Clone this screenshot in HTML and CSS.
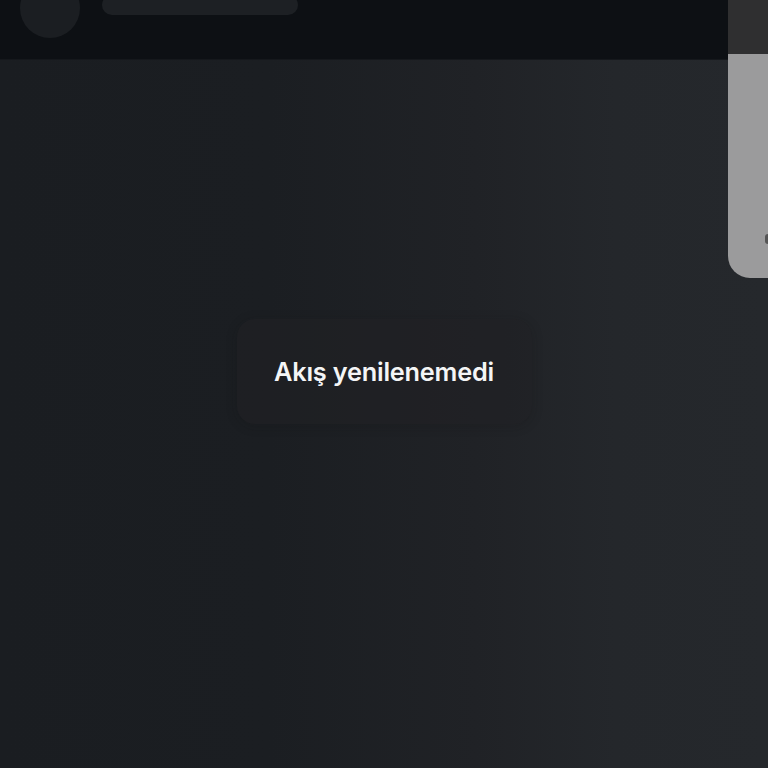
FILE: index.html
```html
<!DOCTYPE html>
<html lang="tr">
<head>
<meta charset="utf-8">
<link rel="stylesheet" href="styles.css">
</head>
<body>
<div class="page">
  <header class="topbar">
    <div class="avatar"></div>
    <div class="namebar"></div>
  </header>
  <main class="feed">
    <div class="toast">Akış yenilenemedi</div>
  </main>
  <aside class="sidepanel">
    <div class="side-top"></div>
    <div class="side-body"><span class="side-dot"></span></div>
  </aside>
</div>
</body>
</html>
```
FILE: styles.css
```css
html, body {
  margin: 0;
  padding: 0;
  width: 768px;
  height: 768px;
  overflow: hidden;
  background: #1b1e22;
}
.page {
  position: relative;
  width: 768px;
  height: 768px;
  display: flex;
  flex-direction: column;
  font-family: Inter, "Noto Sans", sans-serif;
}
.topbar {
  height: 60px;
  flex: none;
  background: #0d1014;
  display: flex;
  align-items: flex-start;
  gap: 22px;
  padding-left: 20px;
  box-sizing: border-box;
  border-bottom: 1px solid #15181c;
}
.avatar {
  width: 60px;
  height: 60px;
  margin-top: -22px;
  border-radius: 50%;
  background: #1b1e22;
}
.namebar {
  width: 196px;
  height: 20px;
  margin-top: -5px;
  border-radius: 10px;
  background: #1d2024;
}
.feed {
  flex: 1;
  display: flex;
  align-items: center;
  justify-content: center;
  padding-bottom: 86px;
  background: linear-gradient(90deg, #1a1d21 0%, #1b1e22 35%, #202226 62%, #24272b 80%, #25282c 100%);
}
.toast {
  width: 295px;
  height: 105px;
  box-sizing: border-box;
  display: flex;
  align-items: center;
  justify-content: center;
  border-radius: 18px;
  background: rgba(32, 33, 36, 0.55);
  box-shadow: 0 2px 12px rgba(20, 20, 22, 0.2);
  color: #f4f5f6;
  font-size: 25.3px;
  font-weight: 600;
  letter-spacing: -0.2px;
}
.sidepanel {
  position: absolute;
  top: 0;
  right: 0;
  width: 40px;
  height: 278px;
  display: flex;
  flex-direction: column;
}
.side-top {
  height: 54px;
  background: #2f2f30;
}
.side-body {
  flex: 1;
  position: relative;
  background: #9b9b9c;
  border-bottom-left-radius: 22px;
}
.side-dot {
  position: absolute;
  right: -3px;
  top: 180px;
  width: 6px;
  height: 10px;
  border-radius: 3px;
  background: #555;
}
```
